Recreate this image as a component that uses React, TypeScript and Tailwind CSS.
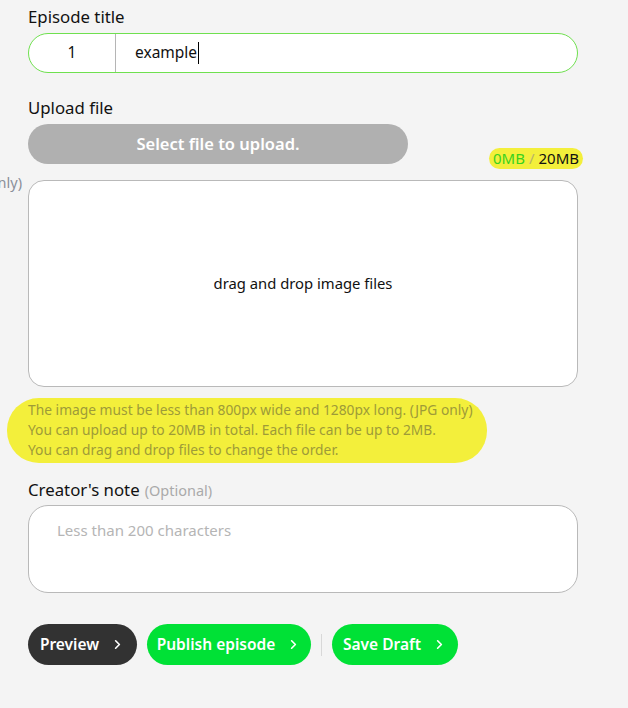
import { ChevronRight } from "lucide-react"

function ActionButton({ label, dark, width }: { label: string; dark?: boolean; width: string }) {
  return (
    <button
      className={
        "h-[41px] rounded-full flex items-center justify-center gap-[11px] text-[15.5px] font-semibold text-white " +
        width +
        (dark ? " bg-[#323232]" : " bg-[#00e136]")
      }
    >
      <span>{label}</span>
      <ChevronRight className="w-[15px] h-[15px]" strokeWidth={2.6} />
    </button>
  )
}

export default function App() {
  return (
    <div
      className="min-h-[708px] w-full overflow-hidden bg-[#f4f4f4] text-[#111]"
      style={{ fontFamily: '"Noto Sans", "Open Sans", sans-serif' }}
    >
      <div className="w-[550px] ml-[28px] pt-[6px] flex flex-col">
        {/* Episode title */}
        <label className="text-[16.8px] leading-[22px]">Episode title</label>
        <div className="mt-[5px] h-[40px] flex rounded-full border border-[#6fe04f] bg-white overflow-hidden">
          <div className="w-[87px] shrink-0 flex items-center justify-center border-r border-[#b5b5b5] text-[15.5px]">1</div>
          <div className="flex items-center pl-[19px] text-[15.5px]">
            <span>example</span>
            <span className="w-px h-[22px] bg-black ml-px"></span>
          </div>
        </div>

        {/* Upload file */}
        <label className="mt-[24px] text-[16.8px] leading-[22px]">Upload file</label>
        <div className="mt-[5px] flex items-end">
          <button className="w-[380px] h-[40px] rounded-full bg-[#b0b0b0] text-white text-[16.5px] font-semibold">
            Select file to upload.
          </button>
          <div className="ml-auto -mr-[5px] -mb-[5px] h-[21px] px-[4px] rounded-full bg-[#f3ef3b] flex items-center text-[15px] leading-none">
            <span className="text-[#3bd21c]">0MB</span>
            <span className="text-[#b8b36a] mx-[4px]">/</span>
            <span className="text-[#111]">20MB</span>
          </div>
        </div>

        <div className="relative mt-[16px]">
          <span className="absolute right-[calc(100%+6px)] top-[-8px] whitespace-nowrap text-[14.5px] text-[#8a8f99]">
            (JPG only)
          </span>
          <div className="h-[207px] rounded-[16px] border border-[#b9b9b9] bg-white flex items-center justify-center text-[14.8px]">
            drag and drop image files
          </div>
        </div>

        {/* Notes */}
        <div className="mt-[11px] -ml-[21px] w-[480px] rounded-[32px] bg-[#f3ef3b] pl-[21px] pt-[2px] pb-[3px] text-[13.8px] leading-[20px] text-[#9e9b38]">
          <p>The image must be less than 800px wide and 1280px long. (JPG only)</p>
          <p>You can upload up to 20MB in total. Each file can be up to 2MB.</p>
          <p>You can drag and drop files to change the order.</p>
        </div>

        {/* Creator's note */}
        <label className="mt-[16px] h-[22px] flex items-baseline gap-[5px] text-[16.8px] leading-[22px]">
          <span>Creator's note</span>
          <span className="text-[14.5px] text-[#aaa]">(Optional)</span>
        </label>
        <div className="mt-[4px] h-[88px] rounded-[20px] border border-[#b9b9b9] bg-white pl-[28px] pt-[13px] text-[15px] text-[#b5b5b5]">
          Less than 200 characters
        </div>

        {/* Actions */}
        <div className="mt-[31px] flex items-center gap-[10px]">
          <ActionButton label="Preview" dark width="w-[109px]" />
          <ActionButton label="Publish episode" width="w-[164px]" />
          <div className="w-px h-[22px] bg-[#d8d8d8]"></div>
          <ActionButton label="Save Draft" width="w-[126px]" />
        </div>
      </div>
    </div>
  )
}
